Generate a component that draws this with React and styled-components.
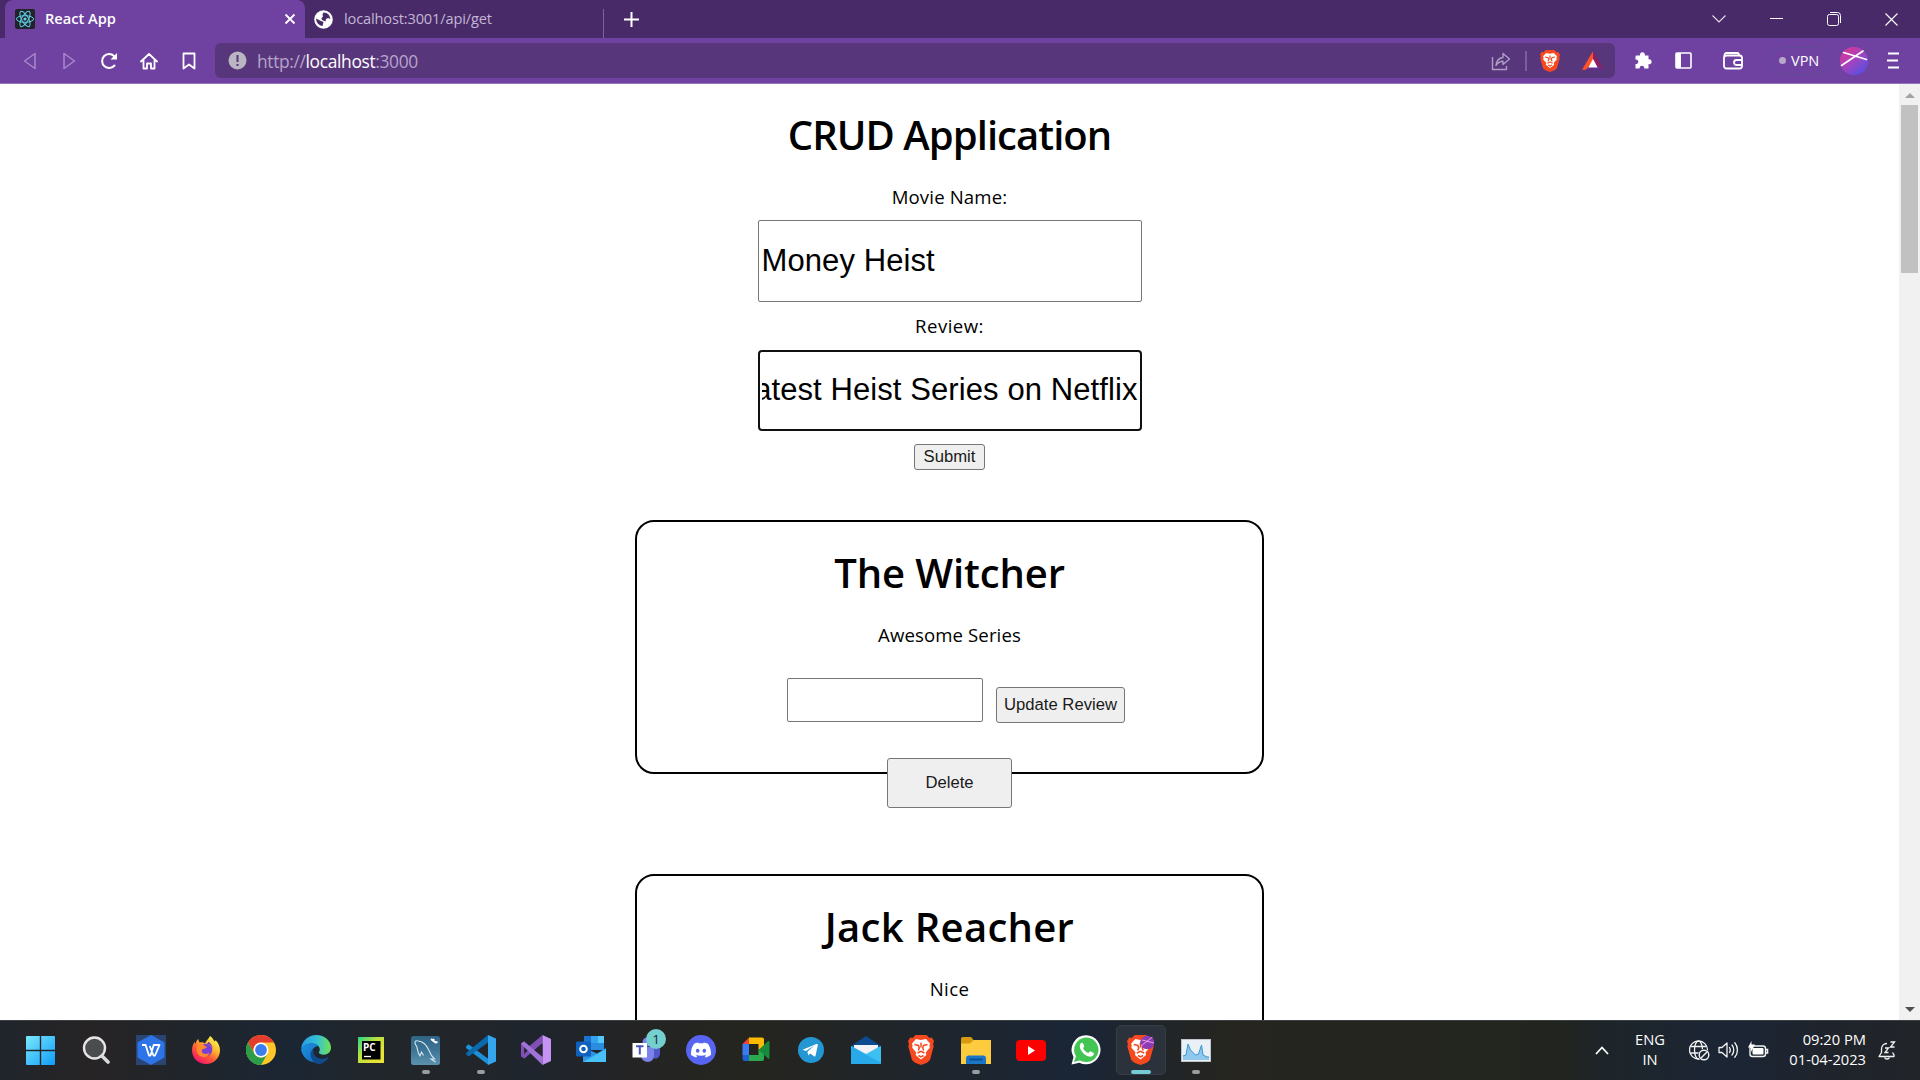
import React from "react";
import styled, { createGlobalStyle, css } from "styled-components";
import { SiDiscord } from "react-icons/si";

const GlobalStyle = createGlobalStyle`
  * { box-sizing: border-box; }
  body { margin: 0; overflow: hidden; background: #fff; }
`;

const ui = css`font-family: "Open Sans", "Noto Sans", sans-serif;`;
const arial = css`font-family: "Liberation Sans", Arial, sans-serif;`;

const Screen = styled.div`
  width: 1920px;
  height: 1080px;
  display: flex;
  flex-direction: column;
  overflow: hidden;
`;

/* ---------- browser chrome ---------- */
const TabStrip = styled.header`
  ${ui}
  height: 38px;
  flex: none;
  display: flex;
  align-items: stretch;
  padding-left: 5px;
  background: #472a67;
`;
const Tab = styled.div`
  display: flex;
  align-items: center;
  width: ${(p) => (p.$active ? 300 : 298)}px;
  padding: 0 9px 0 ${(p) => (p.$active ? 10 : 9)}px;
  gap: ${(p) => (p.$active ? 10 : 11)}px;
  border-radius: 8px 8px 0 0;
  background: ${(p) => (p.$active ? "#6f42a1" : "transparent")};
  color: ${(p) => (p.$active ? "#fff" : "#c4b5d6")};
`;
const TabTitle = styled.span`
  flex: 1;
  padding-bottom: 2px;
  font-size: 14.6px;
  line-height: 20px;
  white-space: nowrap;
  font-weight: ${(p) => (p.$strong ? 600 : 400)};
  letter-spacing: ${(p) => p.$ls || 0}px;
`;
const TabDivider = styled.i`
  width: 1px;
  margin-top: 9px;
  background: #7d62a0;
`;
const NewTab = styled.div`
  width: 54px;
  display: grid;
  place-items: center;
`;
const WindowControls = styled.div`
  margin-left: auto;
  display: flex;
`;
const WindowButton = styled.div`
  width: 57.3px;
  display: grid;
  place-items: center;
`;
const Toolbar = styled.nav`
  ${ui}
  height: 46px;
  flex: none;
  display: flex;
  align-items: center;
  padding-left: 9px;
  background: #6f42a1;
  border-bottom: 1px solid #9274b8;
`;
const NavButton = styled.div`
  flex: none;
  width: 40px;
  height: 40px;
  display: grid;
  place-items: center;
`;
const AddressBar = styled.div`
  flex: none;
  width: 1400px;
  height: 35px;
  margin-left: 6px;
  display: flex;
  align-items: center;
  padding-left: 13px;
  border-radius: 6px;
  background: #58367c;
`;
const Url = styled.span`
  flex: 1;
  margin-left: 10px;
  font-size: 17.4px;
  line-height: 24px;
  letter-spacing: -0.35px;
  color: #b6a3cb;
  b { font-weight: 400; color: #fff; }
`;
const Slot = styled.div`
  width: ${(p) => p.$w}px;
  flex: none;
  display: flex;
  justify-content: center;
`;
const Vpn = styled.div`
  flex: none;
  width: 60px;
  height: 28px;
  display: flex;
  align-items: center;
  gap: 5px;
  padding-left: 8px;
  border: 1px solid #5e4a94;
  border-radius: 14px;
  font-size: 14.5px;
  line-height: 20px;
  color: #fff;
  &::before {
    content: "";
    width: 7px;
    height: 7px;
    border-radius: 50%;
    background: #b5a8cb;
  }
`;

/* ---------- page ---------- */
const Viewport = styled.div`
  height: 936px;
  flex: none;
  display: flex;
  overflow: hidden;
  background: #fff;
`;
const Page = styled.main`
  width: 1899px;
  display: flex;
  flex-direction: column;
  align-items: center;
  padding-top: 27px;
  font-family: "Trebuchet MS", "Open Sans", sans-serif;
  color: #000;
`;
const Title = styled.h1`
  flex: none;
  margin: 0;
  font-size: 40px;
  font-weight: 600;
  line-height: 48px;
  white-space: nowrap;
  letter-spacing: ${(p) => p.$ls || 0}px;
`;
const Text = styled.p`
  flex: none;
  margin: ${(p) => p.$mt || 26}px 0 0;
  font-size: 18.6px;
  line-height: 24px;
  white-space: nowrap;
  letter-spacing: ${(p) => p.$ls || 0}px;
`;
const Field = styled.div`
  ${arial}
  flex: none;
  width: 384px;
  height: ${(p) => (p.$focus ? 81 : 82)}px;
  margin-top: ${(p) => (p.$focus ? 12 : 11)}px;
  display: flex;
  align-items: center;
  padding: ${(p) => (p.$focus ? "0 2px 2px" : "0 3px")};
  border: ${(p) => (p.$focus ? "2px solid #101010" : "1px solid #767676")};
  border-radius: ${(p) => (p.$focus ? 4 : 2)}px;
  font-size: 31px;
`;
const FieldValue = styled.span`
  display: flex;
  justify-content: ${(p) => (p.$end ? "flex-end" : "flex-start")};
  width: 100%;
  overflow: hidden;
  white-space: nowrap;
  line-height: 40px;
  letter-spacing: 0.09px;
`;
const Button = styled.button`
  ${arial}
  flex: none;
  width: ${(p) => p.$w}px;
  height: ${(p) => p.$h}px;
  margin: ${(p) => p.$mt || 0}px 0 0;
  padding: 0;
  border: 1px solid #767676;
  border-radius: 3px;
  background: #efefef;
  color: #1a1a1a;
  font-size: 16.67px;
  line-height: 20px;
  white-space: nowrap;
`;
const Card = styled.section`
  flex: none;
  width: 629px;
  height: 254px;
  margin-top: ${(p) => p.$mt}px;
  display: flex;
  flex-direction: column;
  align-items: center;
  padding-top: 27px;
  border: 2px solid #000;
  border-radius: 19px;
`;
const UpdateRow = styled.div`
  flex: none;
  height: 45px;
  margin: 31px 0 0 13px;
  display: flex;
  align-items: flex-end;
  gap: 13px;
`;
const UpdateInput = styled.input`
  width: 196px;
  height: 44px;
  margin: 0 0 1px;
  border: 1px solid #767676;
  border-radius: 2px;
`;
const Scrollbar = styled.aside`
  width: 21px;
  display: flex;
  flex-direction: column;
  align-items: center;
  background: #f1f1f1;
`;
const ScrollArrow = styled.i`
  width: 0;
  height: 0;
  margin: ${(p) => (p.$down ? "auto 0 8px" : "9px 0 7px")};
  border: 5px solid transparent;
  border-top: ${(p) => (p.$down ? "5px solid #505050" : "0")};
  border-bottom: ${(p) => (p.$down ? "0" : "5px solid #a3a3a3")};
`;
const ScrollThumb = styled.i`
  width: 17px;
  height: 168px;
  background: #c1c1c1;
`;

/* ---------- taskbar ---------- */
const Taskbar = styled.footer`
  ${ui}
  height: 60px;
  flex: none;
  display: flex;
  align-items: center;
  padding: 0 0 1px 13px;
  border-top: 1px solid #3a3f42;
  background: linear-gradient(90deg, #20252c 0, #272425 90px, #20252b 190px, #1b2634 290px, #20262c 350px,
    #22262a 460px, #1f252e 530px, #242424 640px, #25251f 760px, #202529 880px, #1a2536 1080px, #202529 1160px,
    #26251f 1230px, #22251f 1560px, #1e2529 1600px, #1b2535 1730px, #1f242c 1820px, #212429 1920px);
  color: #fff;
`;
const TaskItem = styled.div`
  position: relative;
  flex: none;
  width: ${(p) => (p.$active ? 50 : 55)}px;
  margin: 0 ${(p) => (p.$active ? 2.5 : 0)}px;
  height: 50px;
  display: grid;
  place-items: center;
  border-radius: 5px;
  border: 1px solid ${(p) => (p.$active ? "#363d47" : "transparent")};
  background: ${(p) => (p.$active ? "#2b323c" : "transparent")};
`;
const Indicator = styled.i`
  position: absolute;
  bottom: 0;
  left: 50%;
  transform: translateX(-50%);
  width: ${(p) => (p.$active ? 20 : 8)}px;
  height: 4px;
  border-radius: 2px;
  background: ${(p) => (p.$active ? "#76cbd3" : "#9a9c9e")};
`;
const Badge = styled.b`
  position: absolute;
  top: 3px;
  right: 6px;
  width: 20px;
  height: 20px;
  border-radius: 50%;
  background: #74cfcf;
  color: #14292b;
  font-size: 13.5px;
  font-weight: 400;
  line-height: 20px;
  text-align: center;
`;
const Tray = styled.div`
  margin-left: auto;
  display: flex;
  align-items: center;
  height: 58px;
`;
const TrayText = styled.div`
  width: ${(p) => p.$w}px;
  margin-bottom: 2px;
  font-size: 14.7px;
  line-height: 20px;
  text-align: ${(p) => p.$align};
  white-space: nowrap;
`;
const DiscordMark = styled.div`
  width: 30px;
  height: 30px;
  display: grid;
  place-items: center;
  border-radius: 50%;
  background: #5865f2;
  color: #fff;
`;
const LogoText = styled.text`
  font-family: "Open Sans", sans-serif;
  font-weight: 700;
`;

const Svg = ({ w = 30, h, box, children, ...rest }) => (
  <svg width={w} height={h || w} viewBox={box || `0 0 ${w} ${h || w}`} fill="none" {...rest}>{children}</svg>
);

const BraveLogo = ({ w = 20, h = 22, ball }) => (
  <Svg w={w} h={h} box="0 0 26 30" preserveAspectRatio="none">
    <path d="M7.500 0h11l3 3 2.300-.4L26 6l-.9 3 .6 2.300-3.700 13.600-3 2.800L13 30l-6-2.300-3-2.800L.3 11.300.9 9 0 6l2.200-3.400L4.500 3z" fill="#f6491f" />
    <path d="m8 4 5 1 5-1 4 4.500-.6 2.200.4 2.100-3.900 4.500.4 2.700-2.200 2L13 24.500 9.900 22l-2.200-2 .4-2.700L4.200 12.800l.4-2.100L4 8.500z" fill="#fff" />
    <path d="m6.500 9.600 4 .8.800 2.500-1 2.600M19.500 9.600l-4 .8-.8 2.500 1 2.600M9.500 18l3.500-1.600 3.500 1.600M13 7.500v5M10.500 20.500 13 22l2.500-1.500" stroke="#f6491f" strokeWidth="1.500" />
    {ball && (
      <g>
        <circle cx="19.500" cy="7.500" r="6.800" fill="#8b3cb4" />
        <path d="M13.500 11 24.500 2M14.500 5l11.500 3" stroke="#f7a6e6" strokeWidth=".9" />
      </g>
    )}
  </Svg>
);

const ReactLogo = () => (
  <Svg w={20}>
    <rect width="20" height="20" rx="2" fill="#20232a" />
    <g stroke="#5fd0e6" strokeWidth="1">
      <ellipse cx="10" cy="10" rx="8.600" ry="3.300" />
      <ellipse cx="10" cy="10" rx="8.600" ry="3.300" transform="rotate(60 10 10)" />
      <ellipse cx="10" cy="10" rx="8.600" ry="3.300" transform="rotate(120 10 10)" />
    </g>
    <circle cx="10" cy="10" r="1.600" fill="#5fd0e6" />
  </Svg>
);

const PuzzlePiece = () => (
  <Svg w={19}>
    <path d="M2.500 4.500H6a2.500 2.500 0 1 1 4.800 0h3.700V8.300a2.500 2.500 0 1 1 0 4.800v4.400h-4.300a2.300 2.300 0 1 0-4.500 0H1.500V13a2.300 2.300 0 1 0 0-4.500v-3a1 1 0 0 1 1-1z" fill="#fff" />
  </Svg>
);

const Windows = () => (
  <Svg w={29}>
    <defs>
      <linearGradient id="win" x1="0" y1="0" x2="29" y2="29" gradientUnits="userSpaceOnUse">
        <stop stopColor="#7be9fd" /><stop offset="1" stopColor="#0f9cf8" />
      </linearGradient>
    </defs>
    <path d="M1 0h12.800v13.800H0V1a1 1 0 0 1 1-1zM15.200 0H28a1 1 0 0 1 1 1v12.800H15.200zM0 15.200h13.800V29H1a1 1 0 0 1-1-1zM15.200 15.200H29V28a1 1 0 0 1-1 1H15.200z" fill="url(#win)" />
  </Svg>
);
const Search = () => (
  <Svg w={30} h={28}>
    <circle cx="13.500" cy="12" r="10.500" fill="#4b4c4e" stroke="#e6e6e8" strokeWidth="2.400" />
    <path d="m21 20 6 6" stroke="#d9dadd" strokeWidth="3.600" strokeLinecap="round" />
  </Svg>
);
const Wps = () => (
  <Svg w={30}>
    <rect width="30" height="30" fill="#2b4573" />
    <path d="m15 0 13.500 7.500v15L15 30 1.500 22.500v-15z" fill="#2d74e8" />
    <path d="M6 10h3.600l3.400 10.500h1.500L17.700 10H23.500l-4.500 10.500h-1.500L13.700 11" stroke="#fff" strokeWidth="1.800" strokeLinejoin="round" />
  </Svg>
);
const Firefox = () => (
  <Svg w={30}>
    <defs>
      <linearGradient id="ff" x1="24" y1="3" x2="7" y2="27" gradientUnits="userSpaceOnUse">
        <stop stopColor="#fff44f" /><stop offset=".35" stopColor="#ffb52c" /><stop offset=".65" stopColor="#ff5a36" /><stop offset="1" stopColor="#f5156c" />
      </linearGradient>
    </defs>
    <path d="M19 1c2.500 1.500 3.500 3.800 4.600 5.500.7-.3.900-1 .9-1.600 2.800 2.700 4.500 6.500 4.500 10.300C29 23 22.800 29 15 29S1 23 1 15.400c0-3.500 1-6.500 2.800-8.600.1 1 .3 1.700.8 2.200C5 6.500 6 4.800 7.500 4c0 1.500.4 2.600 1.300 3.400 2-.4 4 0 5.200 1C15 5.500 17.800 4 19 1z" fill="url(#ff)" />
    <circle cx="15" cy="15" r="6.200" fill="#7a3fd6" />
    <path d="M6 11c2-2 4.500-2.300 7-.8l3 1.800c-1 1.500-3 1.500-4 2-2 1-1.500 3.500.5 4.600 2 1 4 0 6-.6-1 3-4 4.500-7 4-4-.6-7-5-5.500-11z" fill="#ff8a2c" />
    <path d="M16 8.500c3 .5 5 3 5.500 5.500 0-3-1.500-5.500-4-7z" fill="#5b2ac0" />
  </Svg>
);
const Chrome = () => (
  <Svg w={30}>
    <circle cx="15" cy="15" r="15" fill="#ffc629" />
    <path d="M15 0a15 15 0 0 1 13 7.500H15A7.500 7.500 0 0 0 8.500 18.800L2 7.500A15 15 0 0 1 15 0z" fill="#e23d2e" />
    <path d="M2 7.500 8.500 18.800a7.500 7.500 0 0 0 13 0L15 30A15 15 0 0 1 2 7.500z" fill="#2b9c48" />
    <circle cx="15" cy="15" r="7.500" fill="#fff" /><circle cx="15" cy="15" r="5.900" fill="#3b7ded" />
  </Svg>
);
const Edge = () => (
  <Svg w={30}>
    <defs>
      <linearGradient id="e1" x1="2" y1="10" x2="29" y2="12" gradientUnits="userSpaceOnUse"><stop stopColor="#2a9fe0" /><stop offset=".5" stopColor="#34c0d6" /><stop offset="1" stopColor="#6ee05c" /></linearGradient>
      <linearGradient id="e2" x1="2" y1="12" x2="20" y2="30" gradientUnits="userSpaceOnUse"><stop stopColor="#1b8bdd" /><stop offset="1" stopColor="#1164b8" /></linearGradient>
    </defs>
    <path d="M.2 13.500C1 5.500 7.500 0 15.200 0 23.800 0 30 6 30 12.600c0 4.400-3.300 7.200-7.200 7.200-3 0-5-1-5-2.200 0-.8 1-1.400 1-3.100 0-3-3.200-6-7.600-6C6 8.500 2 11 .2 13.500z" fill="url(#e1)" />
    <path d="M.1 15C.4 11 4.500 8.200 10 8.200c4 0 6.500 1.200 7.700 3.200-3-.6-6.700 1.600-6.700 6.600 0 6 6 9.500 11 7.600A15 15 0 0 1 .1 15z" fill="url(#e2)" />
    <path d="M12.500 13.500c-2 1.500-3 3.500-3 6 0 5 4 9.500 9 9.800 3.800-.9 7-3.500 9-6.500.3-.7-.3-.9-.8-.6C19 26.400 11 22 12.500 13.500z" fill="#104a8c" />
  </Svg>
);
const PyCharm = () => (
  <Svg w={26}>
    <defs><linearGradient id="pc" x1="0" y1="0" x2="20" y2="20" gradientUnits="userSpaceOnUse"><stop stopColor="#21d789" /><stop offset=".5" stopColor="#b5e040" /><stop offset="1" stopColor="#e8e337" /></linearGradient></defs>
    <rect width="26" height="26" fill="url(#pc)" /><rect x="4" y="4" width="18.500" height="18.500" fill="#000" />
    <LogoText x="5" y="13.500" fontSize="10" fill="#fff">PC</LogoText><path d="M6 19.500h7" stroke="#fff" strokeWidth="1.300" />
  </Svg>
);
const Workbench = () => (
  <Svg w={29}>
    <defs><linearGradient id="wb" x1="0" y1="0" x2="0" y2="29" gradientUnits="userSpaceOnUse"><stop stopColor="#2f6484" /><stop offset=".5" stopColor="#3e7596" /><stop offset="1" stopColor="#5b93ae" /></linearGradient></defs>
    <rect width="29" height="29" rx="2.500" fill="url(#wb)" />
    <path d="M4 7c-.5-2 1.500-2.500 3-2 5 .5 8.500 4 10.500 8.500 1.500 3.500 2.500 6.500 6 9.500h-3.500l4.500 3M4 7c.5 2 1.500 2.500 2 4.500.7 3 .8 6 3 8.500l1.500-4 2 3.500" stroke="#d5e6ee" strokeWidth="1.100" />
    <path d="m20 3 2 1.500 1-1.500M22 4.500l2.500 2 2-.5" stroke="#fff" strokeWidth="2" />
  </Svg>
);
const VsCode = () => (
  <Svg w={30}>
    <path d="M0 11.500 2.500 9.300 22.500 24v6L0 13z" fill="#1d90d8" />
    <path d="M0 18 22 0v7.500L2.700 21.500.3 19.500z" fill="#0b69ae" />
    <path d="m22 0 8 3.500v23L22 30z" fill="#35a5ee" />
  </Svg>
);
const VisualStudio = () => (
  <Svg w={30}>
    <path d="M0 8.500 3 6.500 8.500 11 21.500 0v8L3.500 23.500 0 21.500z" fill="#7f4fb3" />
    <path d="M3.200 11v8l4-4z" fill="#22252b" />
    <path d="m0 8.500 3-2L21.500 22v8L3 12z" fill="#a072d8" /><path d="m21.500 0 8.500 4v22l-8.500 4z" fill="#c493f4" />
    <path d="M21.500 9v12l-7-6z" fill="#2b2635" />
  </Svg>
);
const Outlook = () => (
  <Svg w={30}>
    <path d="M8 1h20v14H8z" fill="#1a74cf" /><path d="M15 1h7v7h-7z" fill="#35a2ee" /><path d="M22 1h6v7h-6z" fill="#55c8fb" /><path d="M15 8h13v7H15z" fill="#2a8de0" />
    <path d="M7 13h2l12 5.500L30 13v14H7z" fill="#2b97e6" /><path d="m7 27 23-13v13z" fill="#47c1f7" />
    <rect y="6.500" width="15" height="15" rx="1.500" fill="#0f61bd" /><circle cx="7.500" cy="14" r="3.300" stroke="#fff" strokeWidth="2" />
  </Svg>
);
const Teams = () => (
  <Svg w={30}>
    <circle cx="16" cy="7" r="4.500" fill="#7b83eb" /><path d="M17 12h12v6.500a5 5 0 0 1-6 5z" fill="#5059c9" />
    <path d="M10 12h13v8.500c0 9-13 8-13 0z" fill="#7b83eb" /><rect x="1.500" y="8" width="14.500" height="14.500" fill="#fff" />
    <path d="M5 11.300h7.500M8.800 11v8.500" stroke="#4b53bc" strokeWidth="2" />
  </Svg>
);
const Discord = () => <DiscordMark><SiDiscord size={20} /></DiscordMark>;
const Meet = () => (
  <Svg w={30}>
    <path d="M1.500 9 8 2.500V9z" fill="#ea4335" /><path d="M8 2.500h13a2 2 0 0 1 2 2V12l-5.500 3V9H8z" fill="#fbbc04" />
    <path d="M1.500 9H8v11H1.500z" fill="#3b7df0" /><path d="M1.500 20H8v6H3.500a2 2 0 0 1-2-2z" fill="#1c60d2" />
    <path d="M8 20h9.500v-5H23v9a2 2 0 0 1-2 2H8z" fill="#2ba94f" /><path d="M17.500 15 27 6.200c.6-.5 1.500-.2 1.500.6v16c0 .8-.9 1.100-1.500.6z" fill="#188a3c" />
  </Svg>
);
const Telegram = () => (
  <Svg w={26}>
    <circle cx="13" cy="13" r="13" fill="#2397d3" /><path d="m4.500 12.800 14-5.800c1-.3 1.500.2 1.300 1.200l-2.300 10.500c-.2.900-.8 1-1.500.6l-3.700-2.700-2 2-.9-3.800 7-6.300-8.500 5.500z" fill="#fff" />
  </Svg>
);
const Mail = () => (
  <Svg w={30} h={28}>
    <path d="M0 10 15 0l15 10v5H0z" fill="#0d4a90" />
    <path d="m0 10 15 7 15-7v18H0z" fill="#3cc0f4" /><path d="M0 28V10l30 17v1z" fill="#27a9ea" />
    <path d="M3 9h24v2.500L15 18 3 11.500z" fill="#f1f3f6" />
  </Svg>
);
const Explorer = () => (
  <Svg w={30} h={27}>
    <path d="M0 2a2 2 0 0 1 2-2h8l3 3.500V9H0z" fill="#d79a10" /><path d="M0 6.500h9L12.500 3H30v24H0z" fill="#fccb3e" />
    <path d="M5 27v-5.500a3 3 0 0 1 3-3h14a3 3 0 0 1 3 3V27z" fill="#1976c9" /><path d="M9 22.500h12" stroke="#0c4f96" strokeWidth="2" strokeLinecap="round" />
  </Svg>
);
const YouTube = () => (
  <Svg w={30} h={21}><rect width="30" height="21" rx="4" fill="#f00" /><path d="m12 6 7 4.500-7 4.500z" fill="#fff" /></Svg>
);
const WhatsApp = () => (
  <Svg w={30}>
    <path d="M15.300.3a14.500 14.500 0 1 1-6.900 27.400L.5 29.500l2-7.500A14.500 14.500 0 0 1 15.300.3z" fill="#fff" />
    <circle cx="15.300" cy="14.800" r="12.200" fill="#43c553" /><path d="m3 27 2-6 4.500 4.300z" fill="#43c553" />
    <path d="M9.500 8.500c1-1.200 2.200-1 2.600-.1l1.100 2.700c.3.800-1.200 1.700-1 2.300 1.200 2.300 2.800 3.700 5 4.500.8.300 1.600-2 2.600-1.500l2.600 1.300c1.500.8-.5 3.600-2.400 3.900-5.500.6-13.500-7.600-10.500-13.100z" fill="#fff" />
  </Svg>
);
const Monitor = () => (
  <Svg w={30} h={23}>
    <rect x=".5" y=".5" width="29" height="22" fill="#e9f1f7" stroke="#bfc5cb" />
    <path d="m2 17 3-1 2-11 2.500 6 2 2 3 3 3-1 3-9 1.500 10 4 2 2 0v3H2z" fill="#8fc8ec" />
    <path d="m2 17 3-1 2-11 2.500 6 2 2 3 3 3-1L20.500 6 22 16l4 2 2 0" stroke="#3b94cf" />
  </Svg>
);
const BraveApp = () => <BraveLogo w={26} h={30} />;
const BraveProfile = () => <BraveLogo w={27} h={30} ball />;

const apps = [
  { Icon: Windows }, { Icon: Search }, { Icon: Wps }, { Icon: Firefox }, { Icon: Chrome }, { Icon: Edge },
  { Icon: PyCharm }, { Icon: Workbench, open: true }, { Icon: VsCode, open: true }, { Icon: VisualStudio },
  { Icon: Outlook }, { Icon: Teams, badge: 1 }, { Icon: Discord }, { Icon: Meet }, { Icon: Telegram }, { Icon: Mail },
  { Icon: BraveApp }, { Icon: Explorer, open: true }, { Icon: YouTube }, { Icon: WhatsApp },
  { Icon: BraveProfile, open: true, active: true }, { Icon: Monitor, open: true },
];

const Movie = ({ name, review, mt, nameLs, reviewLs }) => (
  <Card $mt={mt}>
    <Title $ls={nameLs}>{name}</Title>
    <Text $ls={reviewLs}>{review}</Text>
    <UpdateRow>
      <UpdateInput />
      <Button $w={129} $h={36}>Update Review</Button>
    </UpdateRow>
    <Button $w={125} $h={50} $mt={35}>Delete</Button>
  </Card>
);

export default function App() {
  return (
    <Screen>
      <GlobalStyle />
      <TabStrip>
        <Tab $active>
          <ReactLogo />
          <TabTitle $strong>React App</TabTitle>
          <Svg w={12}><path d="m1.500 1.500 9 9m0-9-9 9" stroke="#fff" strokeWidth="1.800" /></Svg>
        </Tab>
        <Tab>
          <Svg w={19}>
            <circle cx="9.500" cy="9.500" r="9.300" fill="#fff" />
            <path d="M9.500 2.500c2 0 4 .8 5.500 2.500l1.500 4-2.500-1-2 1-.5 2.500-3.500-1.500L7.500 8 9 6.500l-.5-2zM2 8.500l5 2.500 2.500 1-1 4C5 15.500 2.300 13 2 8.500z" fill="#472a67" />
          </Svg>
          <TabTitle $ls={-0.15}>localhost:3001/api/get</TabTitle>
        </Tab>
        <TabDivider />
        <NewTab><Svg w={15}><path d="M7.500 0v15M0 7.500h15" stroke="#fff" strokeWidth="2" /></Svg></NewTab>
        <WindowControls>
          <WindowButton><Svg w={14} h={8}><path d="m.5.500 6.500 6.500 6.500-6.500" stroke="#e6e0ee" strokeWidth="1.100" /></Svg></WindowButton>
          <WindowButton><Svg w={13} h={2}><path d="M0 .500h13" stroke="#fff" /></Svg></WindowButton>
          <WindowButton><Svg w={14}><rect x=".500" y="2.500" width="11" height="11" rx="2" stroke="#fff" /><path d="M3 .500h7.500a3 3 0 0 1 3 3V11" stroke="#fff" /></Svg></WindowButton>
          <WindowButton><Svg w={13}><path d="m.5.500 12 12m0-12-12 12" stroke="#fff" strokeWidth="1.100" /></Svg></WindowButton>
        </WindowControls>
      </TabStrip>

      <Toolbar>
        <NavButton><Svg w={13} h={18}><path d="M12 1.500v15L1.500 9z" stroke="#a888cb" strokeWidth="1.500" strokeLinejoin="round" /></Svg></NavButton>
        <NavButton><Svg w={13} h={18}><path d="M1 1.500v15L11.500 9z" stroke="#a888cb" strokeWidth="1.500" strokeLinejoin="round" /></Svg></NavButton>
        <NavButton><Svg w={18}><path d="M14.500 13.500A7 7 0 1 1 14 4" stroke="#fff" strokeWidth="2" strokeLinecap="round" /><path d="M17 1v6.500h-6.500z" fill="#fff" /></Svg></NavButton>
        <NavButton><Svg w={18}><path d="M1 9.500 9 2l8 7.500M3.500 8v8.500h3.500V11.500h4v5h3.500V8" stroke="#fff" strokeWidth="1.800" strokeLinejoin="round" strokeLinecap="round" /></Svg></NavButton>
        <NavButton><Svg w={14} h={18}><path d="M1.500 1.500h11v15L7 12.500l-5.500 4z" stroke="#fff" strokeWidth="1.800" strokeLinejoin="round" /></Svg></NavButton>
        <AddressBar>
          <Svg w={19}><circle cx="9.500" cy="9.500" r="9" fill="#b9b5c3" /><path d="M9.500 4v7M9.500 13v2" stroke="#58367c" strokeWidth="2" /></Svg>
          <Url>http://<b>localhost</b>:3000</Url>
          <Slot $w={42}>
            <Svg w={20}><path d="M1.500 6v12.500h14V15M5 14.500c.5-5 3-7.500 7-8V2.500L18.500 8 12 13.500v-3.300c-3 0-5 1-7 4.300z" stroke="#ae9dc4" strokeWidth="1.400" strokeLinejoin="round" /></Svg>
          </Slot>
          <Slot $w={7}><Svg w={2} h={20}><path d="M1 0v20" stroke="#8c72aa" strokeWidth="1.400" /></Svg></Slot>
          <Slot $w={42}><BraveLogo /></Slot>
          <Slot $w={44}>
            <Svg w={22} h={19} box="0 0 24 20">
              <path d="m12 0 12 20-12-4z" fill="#8a1f63" /><path d="M0 20h24l-7-4H7z" fill="#662d91" />
              <path d="M0 20h4l8-7V0z" fill="#ff5226" /><path d="m12 8 5 9.500H7z" fill="#fff" />
            </Svg>
          </Slot>
        </AddressBar>
        <Slot $w={56}><PuzzlePiece /></Slot>
        <Slot $w={24}><Svg w={17}><rect x="1" y="1" width="15" height="15" rx="1" stroke="#fff" strokeWidth="1.600" /><path d="M1 1h5v15H1z" fill="#fff" /></Svg></Slot>
        <Slot $w={75}>
          <Svg w={20} h={18}><rect x="1" y="3.500" width="18" height="13" rx="2.500" stroke="#fff" strokeWidth="1.800" /><path d="M1.500 5V3a2 2 0 0 1 2-2H14a2 2 0 0 1 2 2v1M19 8h-5.500a2.200 2.200 0 0 0 0 5H19" stroke="#fff" strokeWidth="1.800" /></Svg>
        </Slot>
        <Vpn>VPN</Vpn>
        <Slot $w={47}>
          <Svg w={28}>
            <defs><linearGradient id="av" x1="4" y1="4" x2="22" y2="26" gradientUnits="userSpaceOnUse"><stop stopColor="#d3389b" /><stop offset=".5" stopColor="#a044c0" /><stop offset="1" stopColor="#5a4fe0" /></linearGradient></defs>
            <circle cx="14" cy="14" r="14" fill="url(#av)" /><path d="M1.500 18.500 23 4M3.500 5.500l23 7" stroke="#fff" strokeWidth="1.600" strokeLinecap="round" />
          </Svg>
        </Slot>
        <Slot $w={32}><Svg w={12} h={17}><path d="M1 1.500h11M0 8.500h11M1 15.500h11" stroke="#fff" strokeWidth="1.800" /></Svg></Slot>
      </Toolbar>

      <Viewport>
        <Page>
          <Title $ls={-0.95}>CRUD Application</Title>
          <Text $ls={0.15}>Movie Name:</Text>
          <Field><FieldValue>Money Heist</FieldValue></Field>
          <Text $mt={12} $ls={0.45}>Review:</Text>
          <Field $focus><FieldValue $end>atest Heist Series on Netflix</FieldValue></Field>
          <Button $w={71} $h={26} $mt={13}>Submit</Button>
          <Movie mt={50} name="The Witcher" review="Awesome Series" nameLs={-0.1} reviewLs={0.1} />
          <Movie mt={100} name="Jack Reacher" review="Nice" nameLs={0.3} reviewLs={0.4} />
        </Page>
        <Scrollbar><ScrollArrow /><ScrollThumb /><ScrollArrow $down /></Scrollbar>
      </Viewport>

      <Taskbar>
        {apps.map(({ Icon, open, active, badge }, i) => (
          <TaskItem key={i} $active={active}>
            <Icon />
            {open && <Indicator $active={active} />}
            {badge && <Badge>{badge}</Badge>}
          </TaskItem>
        ))}
        <Tray>
          <Slot $w={20}><Svg w={14} h={9}><path d="m1 8 6-6.500L13 8" stroke="#fff" strokeWidth="1.800" /></Svg></Slot>
          <Slot $w={76}><TrayText $w={40} $align="center">ENG<br />IN</TrayText></Slot>
          <Slot $w={22}>
            <Svg w={21}><g stroke="#f2f2f2" strokeWidth="1.300"><circle cx="9.500" cy="10" r="9" /><ellipse cx="9.500" cy="10" rx="4" ry="9" /><path d="M1.500 6.500h16M1.500 13h9" /></g><circle cx="15" cy="15" r="6" fill="#1b2533" /><circle cx="15" cy="15" r="4.800" stroke="#f2f2f2" strokeWidth="1.400" /><path d="m12 18 6-6" stroke="#f2f2f2" strokeWidth="1.400" /></Svg>
          </Slot>
          <Slot $w={37}>
            <Svg w={21} h={18}><path d="M1 6.500v5h3l5 4.500V2L4 6.500z" stroke="#f2f2f2" strokeWidth="1.300" strokeLinejoin="round" /><path d="M11.500 6.500c1 1.500 1 3.500 0 5M14 4c2.300 2.800 2.300 7.200 0 10M16.800 1.800c3.500 4 3.500 10.400 0 14.400" stroke="#f2f2f2" strokeWidth="1.300" strokeLinecap="round" /></Svg>
          </Slot>
          <Slot $w={23}>
            <Svg w={21} h={18}><rect x="2" y="5" width="15.500" height="10.500" rx="2.500" stroke="#f2f2f2" strokeWidth="1.400" /><rect x="4.500" y="7" width="11" height="6.500" rx="1" fill="#fff" /><path d="M18 8.500h1.500v3.500H18" stroke="#f2f2f2" strokeWidth="1.600" /><path d="M3.500 0v3.500H7L3 11V6.500H0z" fill="#fff" /></Svg>
          </Slot>
          <TrayText $w={96} $align="right">09:20 PM<br />01-04-2023</TrayText>
          <Slot $w={41}>
            <Svg w={18} h={19}><path d="M9 2.500C5.500 2.500 3.500 5 3.500 8v3.500L1 15.500h15v-1.700l-1.500-2.300" stroke="#f2f2f2" strokeWidth="1.300" strokeLinejoin="round" /><path d="M6.500 16.500c.8 2 4.200 2 5 0M7 7h3.500L7 11.500h3.500M12.500 1h4L12.500 6h4" stroke="#f2f2f2" strokeWidth="1.300" /></Svg>
          </Slot>
          <Slot $w={13} />
        </Tray>
      </Taskbar>
    </Screen>
  );
}
